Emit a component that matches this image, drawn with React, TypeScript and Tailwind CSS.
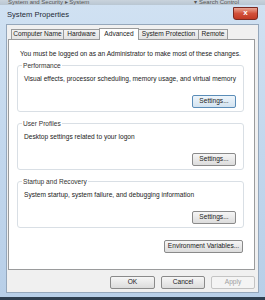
import React from "react";

const font = { fontFamily: '"Liberation Sans", Arial, sans-serif' };

function Btn({
  label,
  disabled,
  focused,
  w = "w-[45px]",
}: {
  label: string;
  disabled?: boolean;
  focused?: boolean;
  w?: string;
}) {
  return (
    <div
      className={`${w} h-[13px] flex items-center justify-center whitespace-nowrap rounded-[2px] border text-[6.6px] leading-none ${
        disabled
          ? "border-[#c4c4c4] bg-[#f4f4f4] text-[#a0a0a0]"
          : focused
          ? "border-[#5b8db8] bg-gradient-to-b from-[#eef5fb] to-[#d3e3f0] text-[#222]"
          : "border-[#8a8a8a] bg-gradient-to-b from-[#f6f6f6] to-[#dcdcdc] text-[#222]"
      }`}
    >
      {label}
    </div>
  );
}

function Group({ title, text, top, focused }: { title: string; text: string; top: string; focused?: boolean }) {
  return (
    <div className={`relative ml-[8px] mr-[10px] ${top} h-[47px] rounded-[3px] border border-[#d9dfe5] pl-[6px] pt-[8px]`}>
      <div className="absolute left-[4px] top-[-5px] bg-white px-[1px] text-[6.6px] leading-[9px] text-[#333] whitespace-nowrap">
        {title}
      </div>
      <div className="text-[6.6px] leading-[9px] text-[#222] whitespace-nowrap">{text}</div>
      <div className="mt-[12px] flex justify-end pr-[7px]">
        <Btn label="Settings..." w="w-[44px]" focused={focused} />
      </div>
    </div>
  );
}

const tabs = [
  { t: "Computer Name", w: "w-[53px]" },
  { t: "Hardware", w: "w-[37px]" },
  { t: "Advanced", w: "w-[40px]" },
  { t: "System Protection", w: "w-[61px]" },
  { t: "Remote", w: "w-[30px]" },
];

export default function App() {
  return (
    <div className="w-[265px] h-[300px] overflow-hidden bg-[#2f3f50] select-none" style={font}>
      {/* window behind */}
      <div className="h-[5px] overflow-hidden bg-gradient-to-b from-[#c9d3dc] to-[#b9c6d2] flex justify-between px-[8px]">
        <span className="text-[6px] leading-[5px] text-[#555] whitespace-nowrap">System and Security ▸ System</span>
        <span className="text-[6px] leading-[5px] text-[#555] whitespace-nowrap pr-[18px]">▾ Search Control</span>
      </div>
      {/* dialog frame */}
      <div className="h-[292px] bg-gradient-to-b from-[#d0e1f2] via-[#c2d7ed] to-[#b8cfe8] px-[6px] pb-[4px] flex flex-col">
        <div className="h-[19px] flex items-center justify-between">
          <span className="text-[7.6px] text-[#1e2a36] pt-[1px] pl-[1px]">System Properties</span>
          <div className="w-[25px] h-[13px] mt-[-3px] rounded-b-[3px] border border-[#7a2a22] bg-gradient-to-b from-[#e8a493] via-[#d2503a] to-[#c23a24] flex items-center justify-center mr-[1px]">
            <span className="text-white text-[8px] font-bold leading-none">x</span>
          </div>
        </div>
        <div className="flex-1 bg-[#f0f0f0] border border-[#95a7bb] flex flex-col">
          {/* tabs */}
          <div className="flex items-end pl-[4px] pt-[2px] h-[14px]">
            {tabs.map(({ t, w }) => {
              const sel = t === "Advanced";
              return (
                <div
                  key={t}
                  className={`${w} text-[6.6px] leading-none whitespace-nowrap text-[#222] border border-[#9a9b9c] border-b-0 flex items-center justify-center -ml-px first:ml-0 ${
                    sel
                      ? "h-[12px] bg-white relative z-10 mb-[-1px]"
                      : "h-[10px] bg-gradient-to-b from-[#f2f2f2] to-[#e3e3e3]"
                  }`}
                >
                  {t}
                </div>
              );
            })}
          </div>
          {/* panel */}
          <div className="ml-[1px] mr-[3px] h-[231px] bg-white border border-[#9a9b9c] flex flex-col">
            <div className="pl-[11px] pt-[9px] text-[6.6px] leading-[9px] text-[#222] whitespace-nowrap">
              You must be logged on as an Administrator to make most of these changes.
            </div>
            <Group
              top="mt-[7px]"
              title="Performance"
              text="Visual effects, processor scheduling, memory usage, and virtual memory"
              focused
            />
            <Group top="mt-[11px]" title="User Profiles" text="Desktop settings related to your logon" />
            <Group
              top="mt-[11px]"
              title="Startup and Recovery"
              text="System startup, system failure, and debugging information"
            />
            <div className="mt-[12px] flex justify-end pr-[11px]">
              <Btn label="Environment Variables..." w="w-[79px]" />
            </div>
          </div>
          {/* bottom buttons */}
          <div className="flex justify-end gap-[6px] pr-[3px] pt-[6px]">
            <Btn label="OK" />
            <Btn label="Cancel" w="w-[44px]" />
            <Btn label="Apply" w="w-[44px]" disabled />
          </div>
        </div>
      </div>
    </div>
  );
}
